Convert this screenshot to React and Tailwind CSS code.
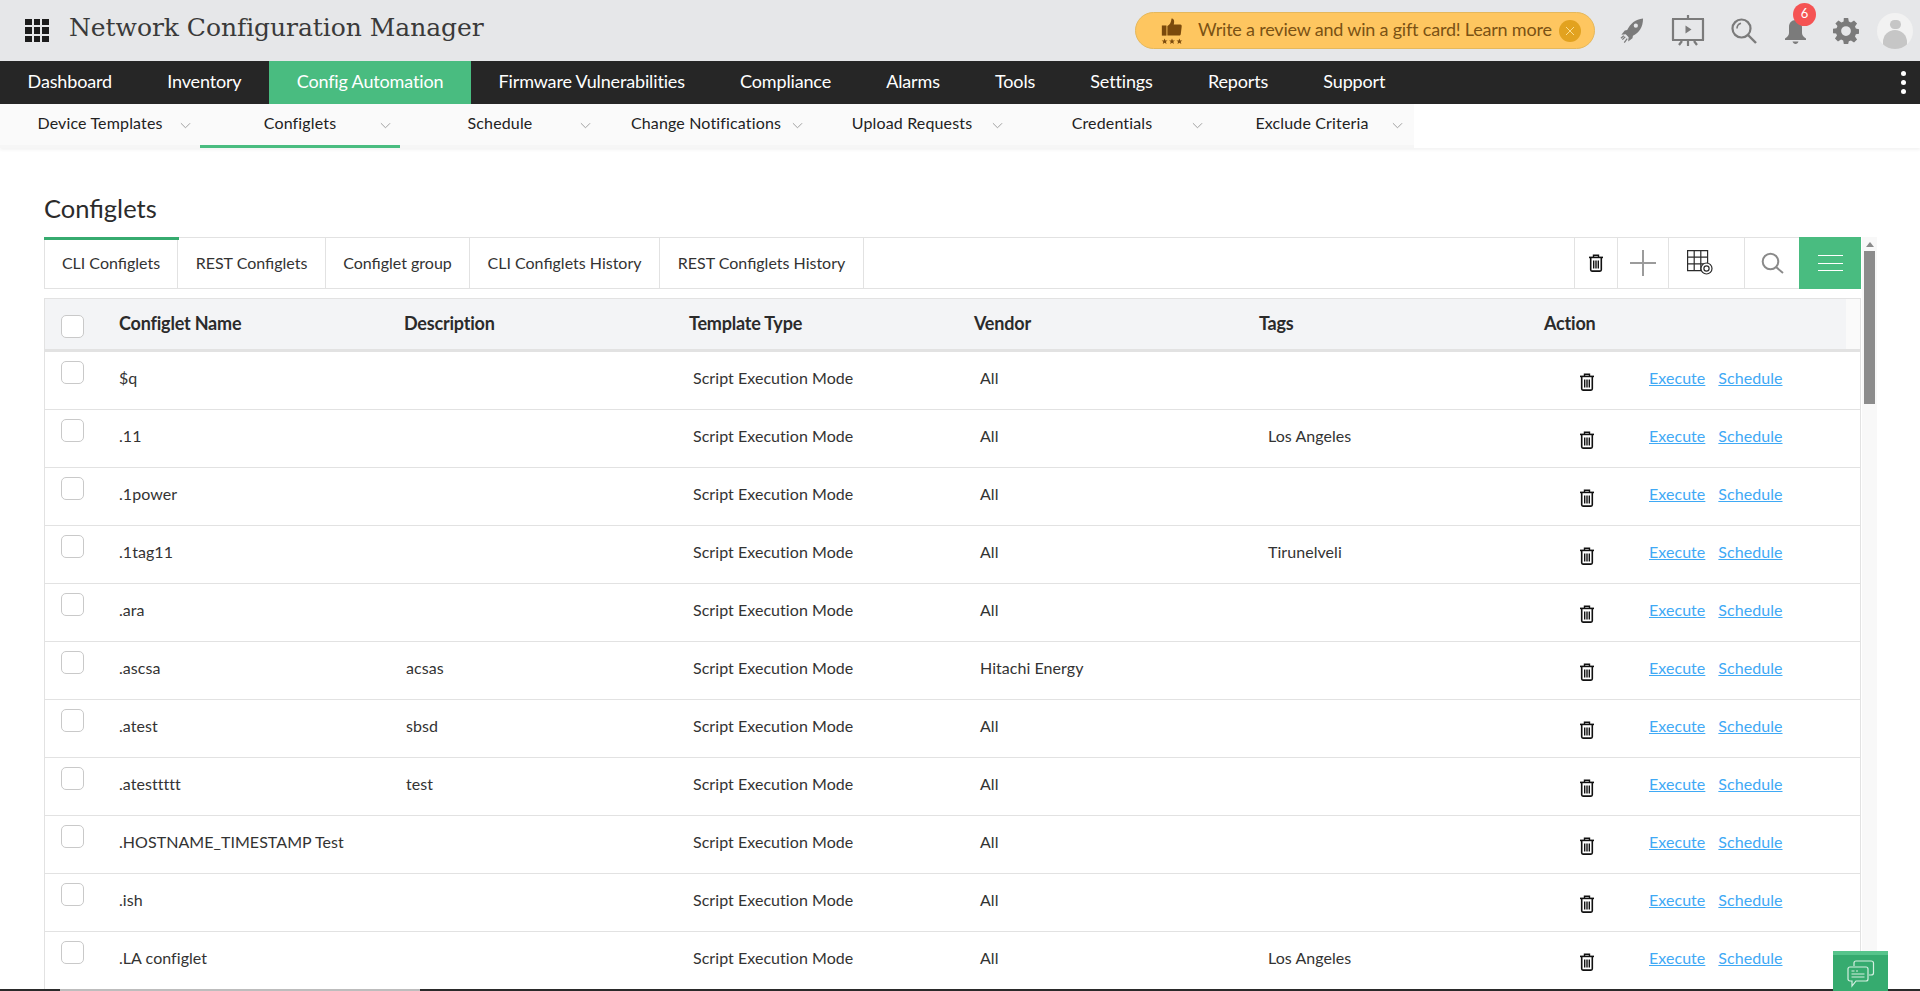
import React from "react";

const mainNav = ["Dashboard","Inventory","Config Automation","Firmware Vulnerabilities","Compliance","Alarms","Tools","Settings","Reports","Support"];
const subNav = [["Device Templates","w-[200px]"],["Configlets","w-[200px]"],["Schedule","w-[200px]"],["Change Notifications","w-[212px]"],["Upload Requests","w-[200px]"],["Credentials","w-[200px]"],["Exclude Criteria","w-[200px]"]];
const tabs = [["CLI Configlets","w-[133px]"],["REST Configlets","w-[148px]"],["Configlet group","w-[144px]"],["CLI Configlets History","w-[190px]"],["REST Configlets History","w-[204px]"]];
const heads = ["Configlet Name","Description","Template Type","Vendor","Tags","Action"];
const rows = [
  ["$q","","All",""],
  [".11","","All","Los Angeles"],
  [".1power","","All",""],
  [".1tag11","","All","Tirunelveli"],
  [".ara","","All",""],
  [".ascsa","acsas","Hitachi Energy",""],
  [".atest","sbsd","All",""],
  [".atesttttt","test","All",""],
  [".HOSTNAME_TIMESTAMP Test","","All",""],
  [".ish","","All",""],
  [".LA configlet","","All","Los Angeles"],
];

const Trash = ({ className }) => (
  <svg viewBox="0 0 16 18" className={className} fill="none" stroke="#111" strokeWidth="1.4">
    <path d="M5.5 3V1.2h5V3" />
    <path d="M1 3.4h14" strokeWidth="1.6" />
    <path d="M2.7 3.6v12.2c0 .8.5 1.3 1.3 1.3h8c.8 0 1.3-.5 1.3-1.3V3.6" strokeWidth="1.6" />
    <path d="M5.7 6.4v8M8 6.4v8M10.3 6.4v8" strokeWidth="1.4" />
  </svg>
);

const Chevron = () => (
  <svg viewBox="0 0 12 7" className="w-[11px] h-[7px]" fill="none" stroke="#999" strokeWidth="1">
    <path d="M1 1l5 5 5-5" />
  </svg>
);

const Checkbox = () => (
  <span className="block h-[23px] w-[23px] rounded-[5px] border border-[#c9c9c9] bg-white" />
);

const Star = ({ x }) => (
  <path transform={`translate(${x} 23)`} d="M3 0l.9 2.200 2.300.1-1.800 1.400.7 2.300L3 4.700 1 6l.6-2.300L-.2 2.300l2.300-.1z" />
);

export default function App() {
  return (
    <div className="relative flex h-screen flex-col overflow-hidden bg-white font-['Lato',sans-serif] text-[#333]">
      {/* Product header */}
      <header className="flex h-[61px] shrink-0 items-center bg-[#e6e7e9]">
        <div className="ml-[25px] grid w-[24px] grid-cols-3 gap-[2px]">
          {Array.from({ length: 9 }).map((_, i) => (
            <span key={i} className="h-[6.5px] w-[6.5px] bg-[#1c1c1c]" />
          ))}
        </div>
        <h1 className="mb-[5px] ml-[20px] whitespace-nowrap font-['DejaVu_Serif',serif] text-[25px] font-normal tracking-[-0.05px] text-[#3a3a3a]">Network Configuration Manager</h1>

        <div className="ml-auto flex h-[37px] w-[460px] items-center rounded-full border border-[#e5b85c] bg-[#fec660]">
          <svg viewBox="0 0 26 30" className="ml-[24px] h-[30px] w-[24px]" fill="#7b4a0c">
            <rect x="2" y="9" width="5" height="11" />
            <path d="M8 9.5c3-1 4-4 4.5-8 2.500 0 3.500 2.500 2.400 6.500H22c1.200 0 1.600 1 1.500 2l-1 8.500c-.2 1-.8 1.500-1.800 1.500H8z" />
            <Star x="2" /><Star x="10" /><Star x="18" />
          </svg>
          <span className="mb-[3px] ml-[14px] whitespace-nowrap text-[18px] tracking-[-0.2px] text-[#7a5214]">Write a review and win a gift card! Learn more</span>
          <span className="ml-auto mr-[13px] flex h-[22px] w-[22px] items-center justify-center rounded-full bg-[#e2a21f]">
            <svg viewBox="0 0 10 10" className="h-[10px] w-[10px]" stroke="#fbdc8f" strokeWidth="1"><path d="M1 1l8 8M9 1l-8 8" /></svg>
          </span>
        </div>

        <div className="ml-[24px] mr-[7px] flex items-center">
          <svg viewBox="0 0 26 28" className="h-[28px] w-[25px]" fill="#7b7b7b">
            <path d="M25 1C17 2 12 6 8.500 13L6 13.500 2.500 18l4.500-.5 3 3-.5 4.500 4.500-3.500.5-2.500C21 15.500 25 10 25 1z" />
            <circle cx="17.500" cy="8.500" r="2.200" fill="#e6e7e9" />
            <path d="M6.500 20l-3 3M8.500 22l-3 4M5 19l-3 2.500" stroke="#7b7b7b" strokeWidth="1.300" />
          </svg>
          <svg viewBox="0 0 34 32" className="ml-[27px] h-[32px] w-[34px]" fill="none" stroke="#7b7b7b" strokeWidth="2.200">
            <path d="M17 0v4M1 4h32M2 4v21M32 4v21M1 25h32M17 25v6M11 26l-3 4M23 26l3 4" />
            <path d="M14.500 10.500l6 4-6 4z" fill="#7b7b7b" stroke="none" />
          </svg>
          <svg viewBox="0 0 26 26" className="ml-[26px] h-[26px] w-[26px]" fill="none" stroke="#7b7b7b" strokeWidth="2.200">
            <circle cx="10.500" cy="10.500" r="9" />
            <path d="M6 10.500a5.500 5.500 0 0 1 4-5.300" strokeWidth="1.600" />
            <path d="M17 17l8 8" strokeWidth="2.400" />
          </svg>
          <div className="relative ml-[27px] h-[26px] w-[23px]">
            <svg viewBox="0 0 23 26" className="h-[26px] w-[23px]" fill="#7b7b7b">
              <path d="M11.500 2c-4 0-6.500 3-6.500 7v6c0 2-1.500 4-4 5.500v1.500h21v-1.500C19.500 19 18 17 18 15V9c0-4-2.500-7-6.500-7z" />
              <path d="M8.500 23.500h6c-.5 1.500-1.500 2.500-3 2.500s-2.500-1-3-2.500z" />
            </svg>
            <span className="absolute left-[9px] top-[-15px] flex h-[23px] w-[23px] items-center justify-center rounded-full bg-[#f55353] text-[13px] text-white">6</span>
          </div>
          <svg viewBox="0 0 24 24" className="ml-[26px] h-[26px] w-[26px]" fill="#7b7b7b">
            <path fillRule="evenodd" d="M10 0h4l.6 3.300 2 .8L19.400 2.200l2.800 2.800-1.900 2.800.8 2 3.300.6v4l-3.300.6-.8 2 1.900 2.800-2.800 2.800-2.800-1.900-2 .8L14 24h-4l-.6-3.300-2-.8-2.800 1.900-2.800-2.800 1.900-2.800-.8-2L0 14v-4l3.300-.6.8-2L2.200 5 5 2.200l2.800 1.900 2-.8zM12 7.500a4.500 4.500 0 1 0 0 9 4.500 4.500 0 0 0 0-9z" />
          </svg>
          <div className="ml-[18px] flex h-[36px] w-[36px] flex-col items-center overflow-hidden rounded-full bg-[#f2f2f2] pt-[7px]">
            <span className="h-[11px] w-[11px] rounded-full bg-[#c6c6c6]" />
            <span className="mt-[1px] h-[20px] w-[24px] rounded-t-[12px] bg-[#c6c6c6]" />
          </div>
        </div>
      </header>

      {/* Main navigation */}
      <nav className="flex h-[43px] shrink-0 items-stretch bg-[#262626] text-[18px] tracking-[-0.15px] text-white">
        {mainNav.map((n) => (
          <div key={n} className={"flex items-center whitespace-nowrap px-[27.6px] pb-[2px] " + (n === "Config Automation" ? "bg-[#49bc80]" : "")}>{n}</div>
        ))}
        <div className="ml-auto mr-[14px] flex flex-col justify-center gap-[4px]">
          <span className="h-[5px] w-[5px] rounded-full bg-white" />
          <span className="h-[5px] w-[5px] rounded-full bg-white" />
          <span className="h-[5px] w-[5px] rounded-full bg-white" />
        </div>
      </nav>

      {/* Sub navigation */}
      <div className="flex h-[44px] shrink-0 shadow-[0_2px_3px_rgba(0,0,0,0.05)]">
        {subNav.map(([n, w]) => (
          <div key={n} className={"grid grid-cols-[1fr_auto_1fr] items-center bg-[#fafafa] pb-[3px] text-[16px] tracking-[0.15px] text-[#222] " + w + (n === "Configlets" ? " border-b-[3px] border-[#49bc80]" : " border-b-[3px] border-[#f6f6f6]")}>
            <span />
            <span className="whitespace-nowrap">{n}</span>
            <span className="flex justify-end pr-[9px] pt-[5px]"><Chevron /></span>
          </div>
        ))}
        <div className="w-[2px] border-b-[3px] border-[#f6f6f6] bg-[#fafafa]" />
      </div>

      {/* Content */}
      <main className="flex min-h-0 flex-1 pl-[44px]">
        <div className="w-[1817px] min-w-0 shrink-0">
          <h2 className="mt-[42px] h-[47px] text-[25.5px] font-normal leading-[36px] text-[#2b2b2b]">Configlets</h2>

          <div className="flex h-[52px] items-stretch border border-[#e2e2e2] bg-white text-[16px] text-[#333]">
            {tabs.map(([t, w], i) => (
              <div key={t} className={"relative flex items-center justify-center whitespace-nowrap border-r border-[#e2e2e2] " + w}>
                {i === 0 && <span className="absolute left-[-1px] top-[-1px] h-[3px] w-[135px] bg-[#36ab6f]" />}
                {t}
              </div>
            ))}
            <div className="-my-px -mr-px ml-auto flex w-[287px] items-stretch">
              <div className="flex w-[43px] items-center justify-center border-l border-[#e2e2e2]"><Trash className="h-[18px] w-[16px]" /></div>
              <div className="flex w-[51px] items-center justify-center border-l border-[#e2e2e2]">
                <svg viewBox="0 0 26 26" className="h-[26px] w-[26px]" stroke="#9b9b9b" strokeWidth="2"><path d="M13 0v26M0 13h26" /></svg>
              </div>
              <div className="flex w-[76px] items-center justify-center border-l border-[#e2e2e2] pb-[2px] pr-[14px]">
                <svg viewBox="0 0 26 25" className="h-[25px] w-[26px]" fill="none" stroke="#2b2b2b" strokeWidth="1.200">
                  <path d="M.6.6h20v20h-20zM7.200.6v20M13.800.6v20M.6 7.200h20M.6 13.800h20" />
                  <circle cx="19.500" cy="18.500" r="5.500" fill="#fff" />
                  <circle cx="19.500" cy="18.500" r="2.600" />
                </svg>
              </div>
              <div className="flex w-[55px] items-center justify-center border-l border-[#e2e2e2]">
                <svg viewBox="0 0 23 22" className="h-[22px] w-[23px]" fill="none" stroke="#8a8a8a" strokeWidth="2">
                  <circle cx="9.500" cy="9.500" r="7.800" /><path d="M15 15l7 6" />
                </svg>
              </div>
              <div className="flex w-[62px] flex-col items-center justify-center gap-[6.500px] bg-[#49bc80]">
                <span className="h-px w-[25px] bg-white" /><span className="h-px w-[25px] bg-white" /><span className="h-px w-[25px] bg-white" />
              </div>
            </div>
          </div>

          {/* Table */}
          <div className="mt-[9px] border-x border-t border-[#e2e2e2]">
            <div className="h-[53px] border-b-[3px] border-[#e2e2e2] bg-[#fafafa] pr-[14px]">
              <div className="grid h-full grid-cols-[74px_repeat(5,285px)_1fr] items-center bg-[#f3f4f6] text-[18px] font-bold tracking-[-0.2px] text-[#2b2b2b]">
                <span className="pl-[16px] pt-[4px]"><Checkbox /></span>
                {heads.map((h) => <span key={h} className="pb-[1px]">{h}</span>)}
              </div>
            </div>
            {rows.map(([name, desc, vendor, tags]) => (
              <div key={name} className="grid h-[58px] grid-cols-[74px_repeat(5,285px)_1fr] items-start border-b border-[#e2e2e2] text-[16px] tracking-[0.05px] text-[#333]">
                <span className="pl-[16px] pt-[9px]"><Checkbox /></span>
                <span className="whitespace-nowrap pt-[14px]">{name}</span>
                <span className="pl-[2px] pt-[14px]">{desc}</span>
                <span className="pl-[4px] pt-[14px]">Script Execution Mode</span>
                <span className="pl-[6px] pt-[14px]">{vendor}</span>
                <span className="pl-[9px] pt-[14px]">{tags}</span>
                <span className="flex items-start pl-[35px]">
                  <Trash className="mt-[21px] h-[18px] w-[16px]" />
                  <a className="ml-[54px] pt-[14px] text-[#3fa9f5] underline">Execute</a>
                  <a className="ml-[13px] pt-[14px] text-[#3fa9f5] underline">Schedule</a>
                </span>
              </div>
            ))}
          </div>
        </div>

        {/* Scrollbar */}
        <div className="ml-px mt-[89px] h-full w-[15px] shrink-0 bg-[#f8f8f8] px-[2px]">
          <svg viewBox="0 0 10 6" className="mx-auto mt-[5px] h-[5px] w-[8px]" fill="#8a8a8a"><path d="M5 0l5 6H0z" /></svg>
          <div className="mt-[4px] h-[153px] bg-[#8c8c8c]" />
        </div>
      </main>

      {/* Bottom strip */}
      <div className="relative z-10 flex h-[2px] shrink-0 bg-[#2a2a2a]">
        <div className="ml-[60px] h-full w-[360px] bg-[#bdbdbd]" />
      </div>

      {/* Chat launcher */}
      <div className="absolute bottom-0 right-[32px] z-20 flex h-[40px] w-[55px] items-start justify-center border-t-[4px] border-[#56c48b] bg-[#36ab6f] pt-[5px]">
        <svg viewBox="0 0 28 30" className="h-[30px] w-[28px]" fill="none" stroke="#d6efe2" strokeWidth="1.200">
          <path d="M7 6V3c0-1 .7-2 2-2h15c1.300 0 2.500 1 2.500 2v10c0 1-1 2-2.500 2h-2" />
          <path d="M3 7h16c1.200 0 2 1 2 2v10c0 1-.8 2-2 2H9l-4 5v-5H3c-1.200 0-2-1-2-2V9c0-1 .8-2 2-2z" fill="#36ab6f" />
          <path d="M4.500 11h3M9 11h2M4.500 14h13M4.500 17h13" />
        </svg>
      </div>
    </div>
  );
}
